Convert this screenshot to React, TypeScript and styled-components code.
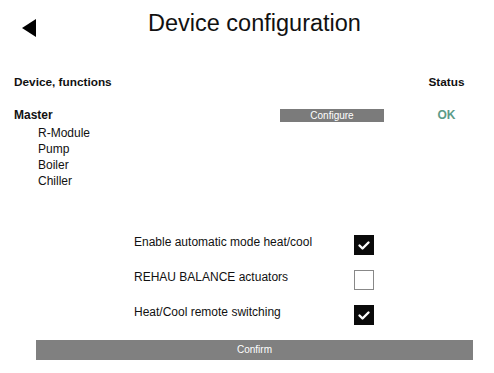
import React from 'react';
import styled, { createGlobalStyle } from 'styled-components';

interface OptionItem {
  label: string;
  checked: boolean;
}

const functions = ['R-Module', 'Pump', 'Boiler', 'Chiller'];

const initialOptions: OptionItem[] = [
  { label: 'Enable automatic mode heat/cool', checked: true },
  { label: 'REHAU BALANCE actuators', checked: false },
  { label: 'Heat/Cool remote switching', checked: true },
];

const App: React.FC = () => {
  const [options, setOptions] = React.useState<OptionItem[]>(initialOptions);

  const toggleHandler = React.useCallback((index: number) => {
    setOptions((prev) =>
      prev.map((item, i) => (i === index ? { ...item, checked: !item.checked } : item)),
    );
  }, []);

  return (
    <>
      <GlobalStyle />
      <Page>
        <Header>
          <BackButton aria-label='Back'>
            <svg width='14' height='18' viewBox='0 0 14 18'>
              <polygon points='14,0 14,18 0,9' fill='#000' />
            </svg>
          </BackButton>
          <Title>Device configuration</Title>
        </Header>

        <Table>
          <HeadCell>Device, functions</HeadCell>
          <span />
          <HeadCell $center>Status</HeadCell>

          <DeviceName>Master</DeviceName>
          <ConfigureButton>Configure</ConfigureButton>
          <StatusText>OK</StatusText>
        </Table>

        <FunctionList>
          {functions.map((name) => (
            <FunctionItem key={name}>{name}</FunctionItem>
          ))}
        </FunctionList>

        <Options>
          {options.map((option, index) => (
            <OptionRow key={option.label}>
              <OptionLabel>{option.label}</OptionLabel>
              <CheckBox $checked={option.checked} onClick={() => toggleHandler(index)}>
                {option.checked && (
                  <svg width='20' height='20' viewBox='0 0 20 20'>
                    <path
                      d='M5.5 10.5 L8.5 13.5 L14.5 7.5'
                      fill='none'
                      stroke='#fff'
                      strokeWidth='2.4'
                      strokeLinecap='round'
                      strokeLinejoin='round'
                    />
                  </svg>
                )}
              </CheckBox>
            </OptionRow>
          ))}
        </Options>

        <ConfirmButton>Confirm</ConfirmButton>
      </Page>
    </>
  );
};

const GlobalStyle = createGlobalStyle`
  body {
    margin: 0;
    background: #ffffff;
    font-family: "Liberation Sans", Arial, sans-serif;
    color: #111111;
  }
`;

const Page = styled.div`
  width: 494px;
  height: 373px;
  overflow: hidden;
  background: #ffffff;
`;

const Header = styled.header`
  display: flex;
  align-items: flex-start;
  padding-top: 9px;
`;

const BackButton = styled.button`
  display: flex;
  padding: 0;
  margin: 10px 0 0 22px;
  background: transparent;
  border: none;
  cursor: pointer;
`;

const Title = styled.h1`
  margin: 0 0 0 112px;
  font-size: 23.5px;
  font-weight: normal;
  line-height: 28px;
  color: #111111;
`;

const Table = styled.div`
  display: grid;
  grid-template-columns: 266px 136px 61px;
  row-gap: 19px;
  align-items: start;
  margin-top: 38px;
  padding-left: 14px;
`;

const HeadCell = styled.div<{ $center?: boolean }>`
  font-size: 11.8px;
  font-weight: bold;
  line-height: 14px;
  text-align: ${({ $center }) => ($center ? 'center' : 'left')};
`;

const DeviceName = styled.div`
  font-size: 12px;
  font-weight: bold;
  line-height: 14px;
`;

const ConfigureButton = styled.button`
  justify-self: start;
  width: 104px;
  height: 13px;
  margin-top: 1px;
  padding: 0;
  background-color: #7b7b7b;
  border: none;
  color: #ffffff;
  font-family: inherit;
  font-size: 10px;
  line-height: 13px;
  cursor: pointer;
`;

const StatusText = styled.div`
  font-size: 12px;
  font-weight: bold;
  line-height: 14px;
  text-align: center;
  color: #5c9c88;
`;

const FunctionList = styled.ul`
  list-style: none;
  margin: 3px 0 0;
  padding-left: 38px;
`;

const FunctionItem = styled.li`
  font-size: 12px;
  line-height: 16px;
`;

const Options = styled.div`
  display: flex;
  flex-direction: column;
  gap: 15px;
  margin-top: 46px;
  padding-left: 134px;
`;

const OptionRow = styled.div`
  display: flex;
  align-items: flex-start;
  height: 20px;
`;

const OptionLabel = styled.span`
  width: 220px;
  font-size: 12px;
  line-height: 14px;
`;

const CheckBox = styled.div<{ $checked: boolean }>`
  box-sizing: border-box;
  width: 20px;
  height: 20px;
  background-color: ${({ $checked }) => ($checked ? '#0a0a0a' : '#ffffff')};
  border: ${({ $checked }) => ($checked ? 'none' : '1.5px solid #888888')};
  cursor: pointer;

  svg {
    display: block;
  }
`;

const ConfirmButton = styled.button`
  display: block;
  width: 437px;
  height: 20px;
  margin: 15px 0 0 36px;
  padding: 0;
  background-color: #808080;
  border: none;
  color: #ffffff;
  font-family: inherit;
  font-size: 10px;
  line-height: 20px;
  cursor: pointer;
`;

export default App;
